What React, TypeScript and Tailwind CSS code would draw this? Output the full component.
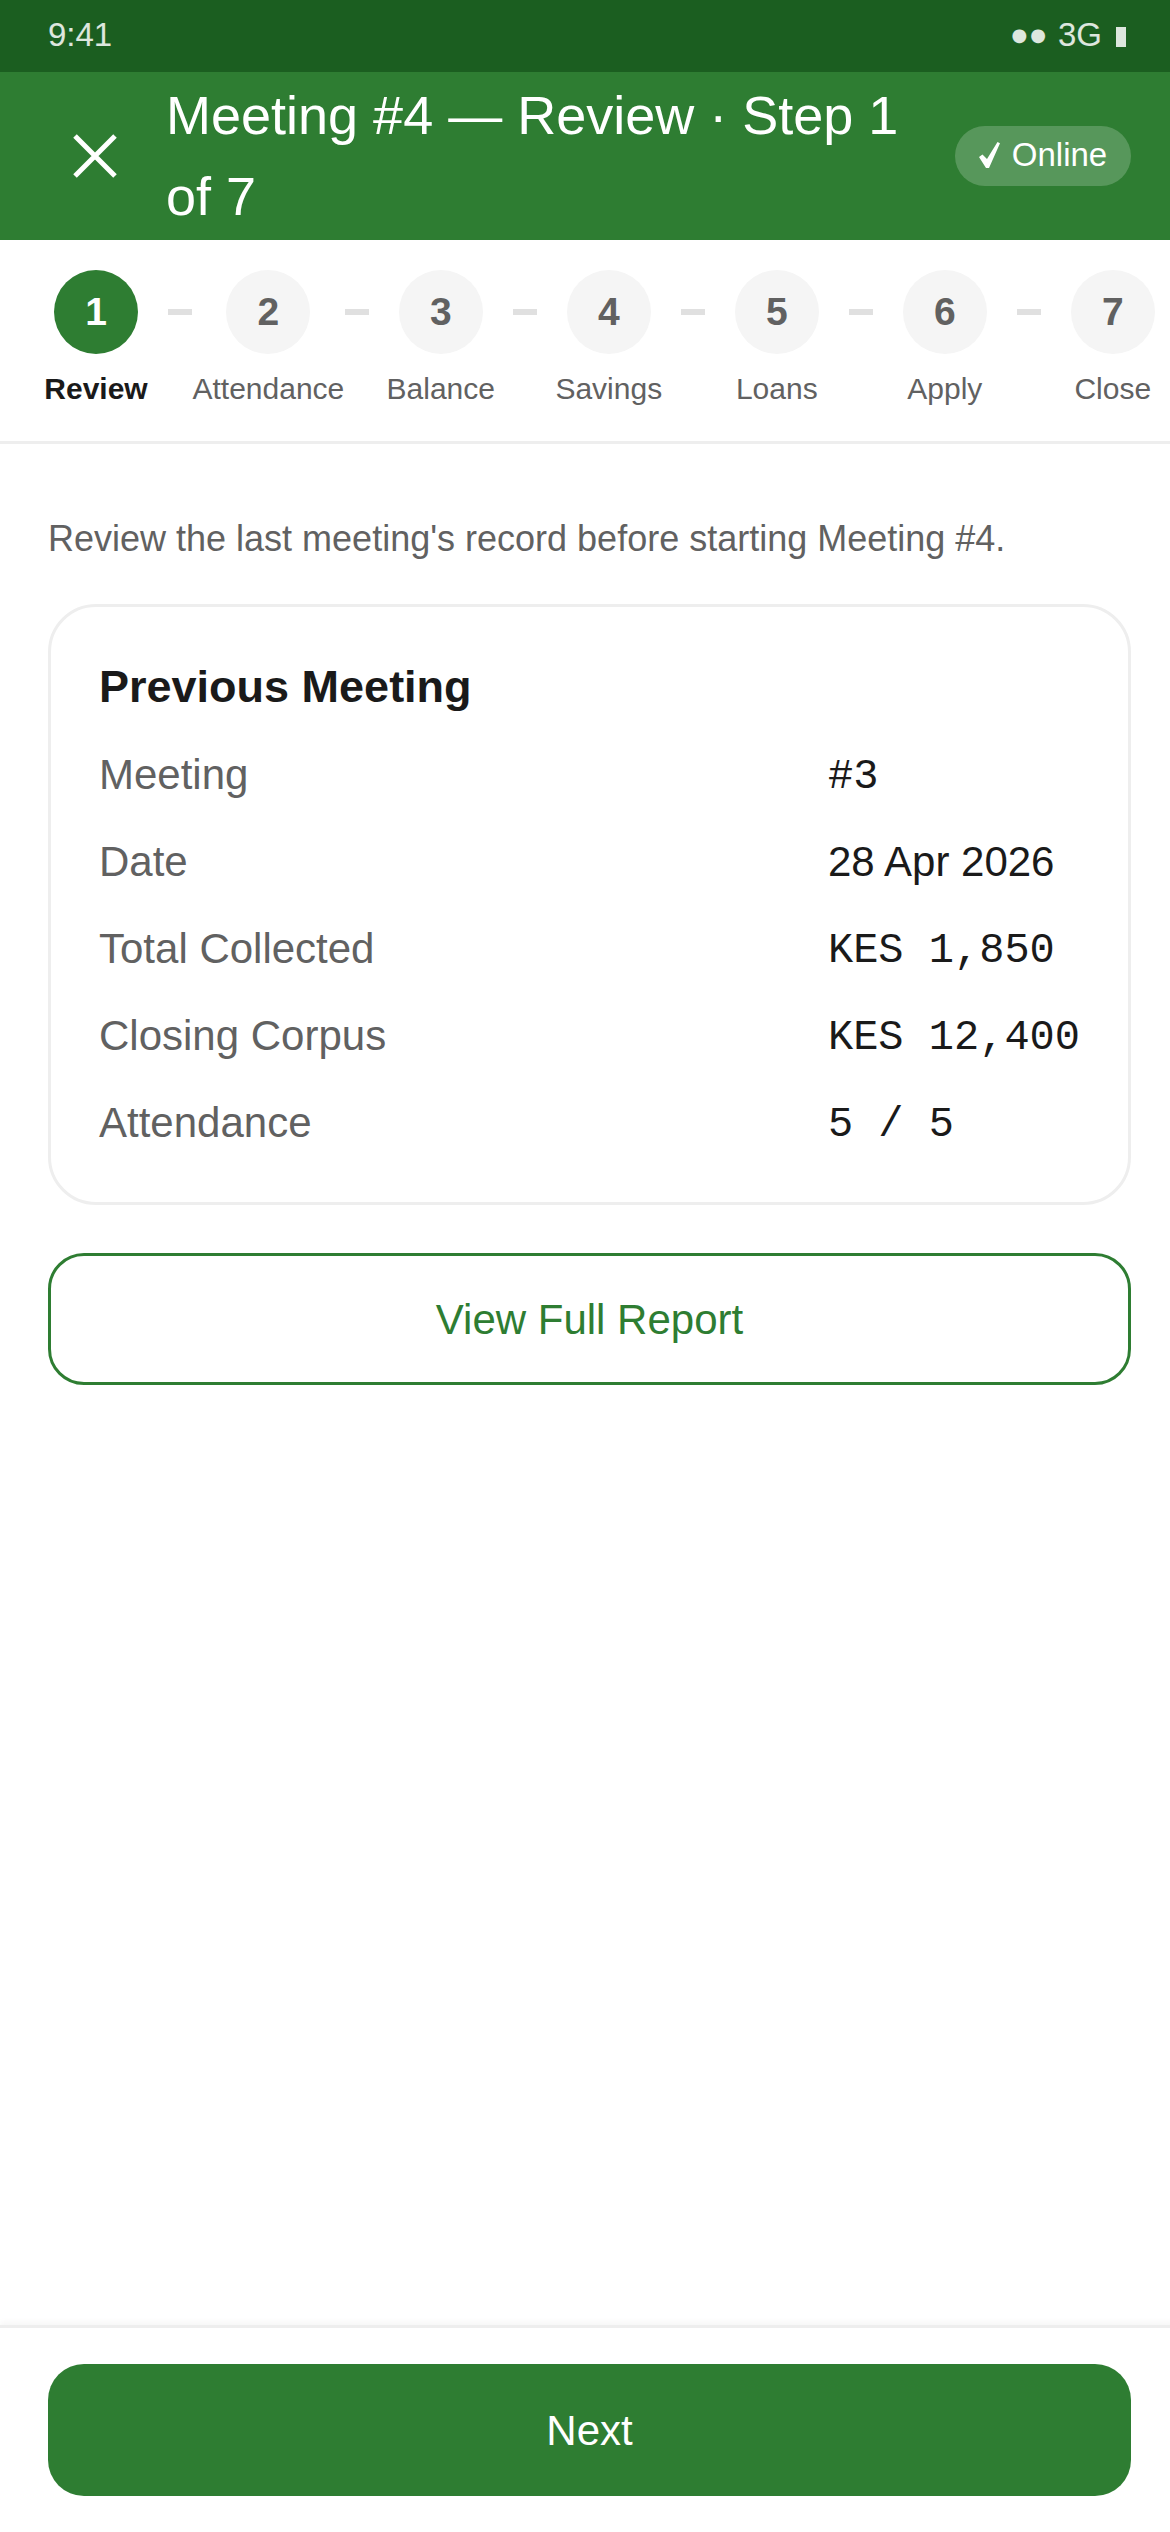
const steps = ["Review", "Attendance", "Balance", "Savings", "Loans", "Apply", "Close"];

const rows = [
  { label: "Meeting", value: "#3", mono: true },
  { label: "Date", value: "28 Apr 2026", mono: false },
  { label: "Total Collected", value: "KES 1,850", mono: true },
  { label: "Closing Corpus", value: "KES 12,400", mono: true },
  { label: "Attendance", value: "5 / 5", mono: true },
];

export default function App() {
  return (
    <div className="w-[1170px] h-[2532px] overflow-hidden bg-white">
      {/* the layout is 1179 wide, the shot cuts off the last 9px */}
      <div className="w-[1179px] h-[2532px] flex flex-col font-['Liberation_Sans',Arial,sans-serif]">
        {/* status bar */}
        <div className="h-[72px] shrink-0 bg-[#1B5E20] flex items-center justify-between pl-[48px] pr-[53px] pb-[3px] text-[33px] text-white/85">
          <span>9:41</span>
          <span className="flex items-center">
            <span className="font-['DejaVu_Sans',sans-serif] text-[18px] tracking-[3px]">●●</span>
            <span className="ml-[9px]">3G</span>
            <span className="ml-[14px] w-[10px] h-[20px] mt-[4px] bg-white/85" />
          </span>
        </div>

        {/* header */}
        <div className="h-[168px] shrink-0 bg-[#2E7D32] flex items-center pl-[24px] pr-[48px] text-white">
          <button className="w-[142px] h-[144px] shrink-0 flex items-center justify-center">
            <svg width="48" height="48" viewBox="0 0 48 48" fill="none" stroke="white" strokeWidth="5">
              <path d="M4 4 L44 44 M44 4 L4 44" />
            </svg>
          </button>
          <div className="flex-1 text-[54px] leading-[81px]">Meeting #4 — Review · Step 1 of 7</div>
          <div className="h-[60px] w-[176px] shrink-0 ml-[24px] pb-[3px] rounded-full bg-white/20 flex items-center justify-center text-[33px] whitespace-nowrap">
            <svg width="21" height="26" viewBox="0 0 21 26" fill="white">
              <path d="M0 15 L3.5 12.5 L8 17 L18.5 0 L21 1.2 L10 26 L7 26 Z" />
            </svg>
            <span className="ml-[12px]">Online</span>
          </div>
        </div>

        {/* stepper */}
        <div className="h-[204px] shrink-0 flex items-start overflow-x-auto px-[24px] pt-[30px] border-b-[3px] border-[#EEEEEE]">
          {steps.map((name, i) => (
            <div key={name} className="flex items-start shrink-0">
              {i > 0 && <div className="w-[24px] h-[6px] mt-[39px] bg-[#E0E0E0] shrink-0" />}
              <div className="min-w-[144px] px-[0.5px] flex flex-col items-center">
                <div
                  className={
                    i === 0
                      ? "w-[84px] h-[84px] rounded-full bg-[#2E7D32] text-white flex items-center justify-center text-[39px] font-bold"
                      : "w-[84px] h-[84px] rounded-full bg-[#F5F5F5] text-[#616161] flex items-center justify-center text-[39px] font-bold"
                  }
                >
                  {i + 1}
                </div>
                <div
                  className={
                    i === 0
                      ? "mt-[12px] text-[30px] leading-[45px] font-bold text-[#1A1A1A] whitespace-nowrap"
                      : "mt-[12px] text-[30px] leading-[45px] text-[#616161] whitespace-nowrap"
                  }
                >
                  {name}
                </div>
              </div>
            </div>
          ))}
        </div>

        {/* content */}
        <div className="flex-1 px-[48px] pt-[68px]">
          <p className="text-[36px] leading-[54px] text-[#616161]">
            Review the last meeting's record before starting Meeting #4.
          </p>
          <div className="mt-[38px] border-[3px] border-[#EEEEEE] rounded-[48px] p-[48px]">
            <div className="text-[45px] leading-[64px] font-bold text-[#1A1A1A] mb-[24px]">Previous Meeting</div>
            <div className="grid grid-cols-[1fr_auto] gap-y-[24px]">
              {rows.map((row) => (
                <div key={row.label} className="contents">
                  <div className="text-[42px] leading-[63px] text-[#616161]">{row.label}</div>
                  <div
                    className={
                      row.mono
                        ? "h-[63px] text-[42px] leading-[69px] text-[#1A1A1A] whitespace-pre font-['Liberation_Mono',monospace]"
                        : "h-[63px] text-[42px] leading-[63px] text-[#1A1A1A] whitespace-pre"
                    }
                  >
                    {row.value}
                  </div>
                </div>
              ))}
            </div>
          </div>
          <button className="mt-[48px] w-full h-[132px] rounded-[36px] border-[3px] border-[#2E7D32] text-[#2E7D32] text-[42px]">
            View Full Report
          </button>
        </div>

        {/* footer */}
        <div className="h-[207px] shrink-0 border-t-[3px] border-[#EEEEEE] px-[48px] pt-[36px] shadow-[0_-3px_6px_rgba(0,0,0,0.04)]">
          <button className="w-full h-[132px] rounded-[36px] bg-[#2E7D32] text-white text-[42px]">Next</button>
        </div>
      </div>
    </div>
  );
}
